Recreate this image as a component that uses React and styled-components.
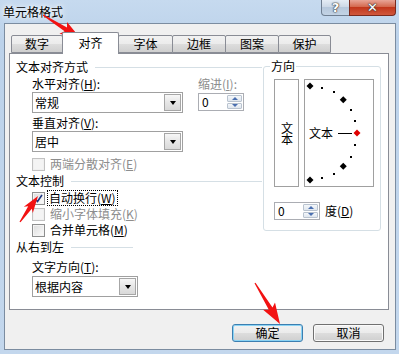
import React from 'react'
import styled, { createGlobalStyle } from 'styled-components'

const GlobalStyle = createGlobalStyle`
  html, body { margin: 0; padding: 0; background: #c0d5ec; }
  body {
    font-family: "Noto Sans CJK SC", "Liberation Sans", sans-serif;
    font-size: 12px;
    color: #000;
  }
  * { box-sizing: border-box; }
`

const Window = styled.div`
  position: relative;
  width: 399px;
  height: 354px;
  display: flex;
  flex-direction: column;
  padding: 0 3px 4px 4px;
  background: linear-gradient(#c6daef, #bcd2ea 40px, #c3d7ed);
  overflow: hidden;
`

const TitleBar = styled.div`
  height: 23px;
  display: flex;
  justify-content: space-between;
  align-items: flex-start;
`

const Title = styled.div`
  margin-left: -1px;
  padding-top: 5px;
  line-height: 14px;
  font-size: 12px;
  text-shadow: 0 0 5px #fff, 0 0 8px #fff;
`

const Controls = styled.div`
  display: flex;
`

const CapButton = styled.div`
  height: 16px;
  width: ${p => p.w}px;
  display: flex;
  align-items: center;
  justify-content: center;
  border: 1px solid ${p => (p.close ? '#7a2a1e' : '#6f7f92')};
  border-top: none;
  margin-left: -1px;
  border-radius: ${p => (p.close ? '0 0 4px 0' : '0 0 0 4px')};
  background: ${p =>
    p.close
      ? 'linear-gradient(#e8a597, #d4694f 45%, #c2371c 50%, #d0583d)'
      : 'linear-gradient(#e4ecf5, #cdd9e7 45%, #b6c8dc 50%, #c3d3e5)'};
  color: #fff;
  font: bold 13px "DejaVu Sans", sans-serif;
  line-height: 14px;
  text-shadow: 0 0 1px #333, 0 0 1px #333, 0 0 2px #444;
`

const Client = styled.div`
  flex: 1;
  display: flex;
  flex-direction: column;
  background: #f0f0f0;
  border: 1px solid #7b8ca0;
`

const Tabs = styled.div`
  display: flex;
  align-items: flex-end;
  margin-top: 8px;
  padding-left: 6px;
  position: relative;
  z-index: 1;
`

const Tab = styled.div`
  width: ${p => p.w}px;
  height: ${p => (p.active ? 22 : 18)}px;
  margin-left: ${p => (p.first ? 0 : -1)}px;
  margin-bottom: ${p => (p.active ? -1 : 0)}px;
  border: 1px solid #898c95;
  border-bottom: ${p => (p.active ? 'none' : '1px solid #898c95')};
  border-radius: 2px 2px 0 0;
  background: ${p => (p.active ? '#fff' : 'linear-gradient(#f2f2f2, #ebebeb 50%, #dddddd 51%, #cfcfcf)')};
  display: flex;
  align-items: center;
  justify-content: center;
  padding-bottom: ${p => (p.active ? 2 : 0)}px;
  line-height: 14px;
  position: relative;
  z-index: ${p => (p.active ? 2 : 1)};
`

const Panel = styled.div`
  width: 380px;
  height: 257px;
  margin-left: 4px;
  border: 1px solid #898c95;
  background: #fff;
  display: flex;
  gap: 1px;
  padding-left: 6px;
`

const LeftCol = styled.div`
  width: 246px;
  display: flex;
  flex-direction: column;
`

const Legend = styled.div`
  display: flex;
  align-items: center;
  gap: 7px;
  height: 14px;
  line-height: 14px;
  margin-top: ${p => p.mt}px;
  &::after {
    content: '';
    height: 1px;
    background: #d5dfe5;
    ${p => (p.line ? `width: ${p.line}px;` : 'flex: 1;')}
  }
`

const Indent = styled.div`
  padding-left: 16px;
  margin-top: ${p => p.mt || 0}px;
  display: flex;
  flex-direction: ${p => (p.row ? 'row' : 'column')};
  gap: ${p => (p.row ? 15 : 0)}px;
`

const Field = styled.div`
  display: flex;
  flex-direction: column;
`

const Label = styled.div`
  height: 14px;
  line-height: 14px;
  margin-top: ${p => p.mt || 0}px;
  color: ${p => (p.disabled ? '#8d8d8d' : '#000')};
  white-space: nowrap;
`

const SelectBox = styled.div`
  width: ${p => p.w}px;
  height: 21px;
  margin-top: ${p => p.mt || 0}px;
  display: flex;
  align-items: center;
  border: 1px solid #a0a0a0;
  padding: 1px 1px 1px 2px;
  background: #fff;
`

const SelectText = styled.div`
  flex: 1;
  line-height: 14px;
`

const DropButton = styled.div`
  width: 17px;
  height: 17px;
  border: 1px solid #a6a6a6;
  background: linear-gradient(#f7f7f7, #e6e6e6 50%, #d9d9d9);
  display: flex;
  align-items: center;
  justify-content: center;
  &::after {
    content: '';
    border-top: 4px solid #000;
    border-left: 3.5px solid transparent;
    border-right: 3.5px solid transparent;
  }
`

const SpinBox = styled.div`
  width: 46px;
  height: 18px;
  margin-top: ${p => p.mt || 0}px;
  border: 1px solid #abadb3;
  background: #fff;
  display: flex;
  align-items: stretch;
  padding: 1px;
`

const SpinText = styled.div`
  flex: 1;
  padding-left: 2px;
  line-height: 14px;
`

const SpinButtons = styled.div`
  width: 15px;
  display: flex;
  flex-direction: column;
  gap: 1px;
`

const SpinArrow = styled.div`
  flex: 1;
  border: 1px solid #b9c3cf;
  border-radius: 1px;
  background: linear-gradient(#f4f7fa, #dfe6ee);
  display: flex;
  align-items: center;
  justify-content: center;
  &::after {
    content: '';
    border-left: 3px solid transparent;
    border-right: 3px solid transparent;
    ${p => (p.down ? 'border-top: 3px solid #4a6fb0;' : 'border-bottom: 3px solid #4a6fb0;')}
  }
`

const CheckRow = styled.div`
  height: 16px;
  display: flex;
  align-items: center;
  gap: ${p => (p.focus ? 3 : 4)}px;
  margin-top: ${p => p.mt || 0}px;
  color: ${p => (p.disabled ? '#8d8d8d' : '#000')};
`

const Box = styled.div`
  width: 13px;
  height: 13px;
  border: 1px solid ${p => (p.disabled ? '#c2c2c2' : '#8e8f8f')};
  background: ${p => (p.disabled ? '#f4f4f4' : 'linear-gradient(135deg, #dcdcdc, #fdfdfd)')};
  display: flex;
  align-items: center;
  justify-content: center;
  box-shadow: inset 0 0 0 1px ${p => (p.disabled ? '#f0f0f0' : '#f4f4f4')};
`

const CheckText = styled.span`
  line-height: 14px;
  padding: 0 1px;
  outline: ${p => (p.focus ? '1px dotted #000' : 'none')};
`

const Group = styled.fieldset`
  width: 118px;
  height: 172px;
  margin: 5px 0 0 0;
  padding: 0;
  border: 1px solid #d5dfe5;
  border-radius: 3px;
  min-width: 0;
`

const GroupTitle = styled.legend`
  margin-left: 6px;
  padding: 0 1px;
  line-height: 14px;
`

const GroupBody = styled.div`
  padding: 6px 0 0 10px;
`

const Dial = styled.div`
  display: flex;
  gap: 5px;
`

const VertBox = styled.div`
  width: 25px;
  height: 108px;
  border: 1px solid #a0a0a0;
  display: flex;
  align-items: center;
  justify-content: center;
`

const VertText = styled.span`
  writing-mode: vertical-rl;
  line-height: 14px;
  letter-spacing: -1px;
`

const ArcBox = styled.div`
  position: relative;
  width: 70px;
  height: 108px;
  border: 1px solid #a0a0a0;
  display: flex;
  align-items: center;
  padding-left: 4px;
  line-height: 14px;
`

const ArcSvg = styled.svg`
  position: absolute;
  left: 0;
  top: 0;
`

const DegreeRow = styled.div`
  display: flex;
  align-items: center;
  gap: 5px;
  margin-top: 15px;
  line-height: 14px;
`

const Footer = styled.div`
  display: flex;
  justify-content: flex-end;
  gap: 10px;
  padding-right: 11px;
  margin-top: 14px;
`

const Button = styled.div`
  width: 71px;
  height: 18px;
  border: 1px solid ${p => (p.primary ? '#3c7fb1' : '#707070')};
  border-radius: 3px;
  background: linear-gradient(#f2f2f2, #ebebeb 50%, #dddddd 51%, #cfcfcf);
  box-shadow: ${p => (p.primary ? 'inset 0 0 0 1px #8ad3f4' : 'inset 0 0 0 1px #fafafa')};
  display: flex;
  align-items: center;
  justify-content: center;
  line-height: 14px;
`

const Overlay = styled.svg`
  position: absolute;
  left: 0;
  top: 0;
  pointer-events: none;
`

const arrow = (x1, y1, x2, y2, head, hw) => {
  const len = Math.hypot(x2 - x1, y2 - y1)
  const ux = (x2 - x1) / len
  const uy = (y2 - y1) / len
  const nx = -uy
  const ny = ux
  const bx = x2 - ux * head
  const by = y2 - uy * head
  const p = (x, y) => `${x.toFixed(1)},${y.toFixed(1)}`
  return [
    p(x1 + nx * 0.6, y1 + ny * 0.6),
    p(bx + nx * 2.2, by + ny * 2.2),
    p(bx - ux * 3 + nx * hw, by - uy * 3 + ny * hw),
    p(x2, y2),
    p(bx - ux * 3 - nx * hw, by - uy * 3 - ny * hw),
    p(bx - nx * 2.2, by - ny * 2.2),
    p(x1 - nx * 0.6, y1 - ny * 0.6),
  ].join(' ')
}

const Dots = () => {
  const cx = 5
  const cy = 53
  const r = 47
  const marks = []
  for (let a = 90; a >= -90; a -= 15) {
    const rad = (a * Math.PI) / 180
    const x = cx + r * Math.cos(rad)
    const y = cy - r * Math.sin(rad)
    if (a % 45 === 0) {
      const s = 3.5
      marks.push(
        <polygon
          key={a}
          points={`${x},${y - s} ${x + s},${y} ${x},${y + s} ${x - s},${y}`}
          fill={a === 0 ? '#e00000' : '#000'}
        />
      )
    } else {
      marks.push(<rect key={a} x={Math.round(x) - 1} y={Math.round(y) - 1} width="2" height="2" fill="#000" />)
    }
  }
  return (
    <ArcSvg width="68" height="106" viewBox="0 0 68 106">
      <line x1="33" y1="53.5" x2="47" y2="53.5" stroke="#000" strokeWidth="1" />
      {marks}
    </ArcSvg>
  )
}

const Select = ({ w, mt, children }) => (
  <SelectBox w={w} mt={mt}>
    <SelectText>{children}</SelectText>
    <DropButton />
  </SelectBox>
)

const Spinner = ({ mt }) => (
  <SpinBox mt={mt}>
    <SpinText>0</SpinText>
    <SpinButtons>
      <SpinArrow />
      <SpinArrow down />
    </SpinButtons>
  </SpinBox>
)

const Check = ({ checked, disabled, focus, mt, children }) => (
  <CheckRow disabled={disabled} focus={focus} mt={mt}>
    <Box disabled={disabled}>
      {checked && (
        <svg width="9" height="9" viewBox="0 0 9 9">
          <path d="M1 5 L3.5 7.5 L8 1" fill="none" stroke="#1d3680" strokeWidth="1.6" />
        </svg>
      )}
    </Box>
    <CheckText focus={focus}>{children}</CheckText>
  </CheckRow>
)

const tabs = [
  ['数字', 52],
  ['对齐', 57],
  ['字体', 55],
  ['边框', 54],
  ['图案', 54],
  ['保护', 53],
]

export default function App() {
  return (
    <>
      <GlobalStyle />
      <Window>
        <TitleBar>
          <Title>单元格格式</Title>
          <Controls>
            <CapButton w={29}>?</CapButton>
            <CapButton w={47} close>✕</CapButton>
          </Controls>
        </TitleBar>
        <Client>
          <Tabs>
            {tabs.map(([name, w], i) => (
              <Tab key={name} w={w} first={i === 0} active={i === 1}>{name}</Tab>
            ))}
          </Tabs>
          <Panel>
            <LeftCol>
              <Legend mt={6}>文本对齐方式</Legend>
              <Indent row mt={3}>
                <Field>
                  <Label>水平对齐(<u>H</u>):</Label>
                  <Select w={151} mt={1}>常规</Select>
                </Field>
                <Field>
                  <Label disabled>缩进(<u>I</u>):</Label>
                  <Spinner mt={2} />
                </Field>
              </Indent>
              <Indent>
                <Label mt={3}>垂直对齐(<u>V</u>):</Label>
                <Select w={151} mt={1}>居中</Select>
                <Check disabled mt={4}>两端分散对齐(<u>E</u>)</Check>
              </Indent>
              <Legend mt={2}>文本控制</Legend>
              <Indent mt={2}>
                <Check checked focus>自动换行(<u>W</u>)</Check>
                <Check disabled>缩小字体填充(<u>K</u>)</Check>
                <Check>合并单元格(<u>M</u>)</Check>
              </Indent>
              <Legend mt={2} line={62}>从右到左</Legend>
              <Indent>
                <Label mt={6}>文字方向(<u>T</u>):</Label>
                <Select w={106} mt={2}>根据内容</Select>
              </Indent>
            </LeftCol>
            <Group>
              <GroupTitle>方向</GroupTitle>
              <GroupBody>
                <Dial>
                  <VertBox>
                    <VertText>文本</VertText>
                  </VertBox>
                  <ArcBox>
                    <Dots />
                    <span>文本</span>
                  </ArcBox>
                </Dial>
                <DegreeRow>
                  <Spinner />
                  <span>度(<u>D</u>)</span>
                </DegreeRow>
              </GroupBody>
            </Group>
          </Panel>
          <Footer>
            <Button primary>确定</Button>
            <Button>取消</Button>
          </Footer>
        </Client>
        <Overlay width="399" height="354" viewBox="0 0 399 354">
          <polygon points={arrow(43, 15, 81, 39, 18, 7)} fill="#f21212" />
          <polygon points={arrow(20, 222, 38, 196, 14, 5.5)} fill="#f21212" />
          <polygon points={arrow(255, 283, 280, 324, 18, 7)} fill="#f21212" />
        </Overlay>
      </Window>
    </>
  )
}
